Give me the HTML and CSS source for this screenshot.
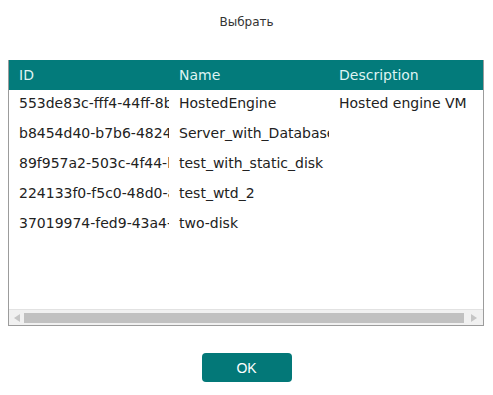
FILE: index.html
```html
<!doctype html>
<html>
<head>
  <meta charset='UTF-8'>
  <title>Выбрать</title>
  <link rel="stylesheet" href="styles.css">
</head>
<body>
  <div class='dialog'>
    <h1 class='title'>Выбрать</h1>
    <div class='grid_box'>
      <div class='grid_view'>
        <table class='grid'>
          <colgroup><col><col><col></colgroup>
          <thead>
            <tr><th>ID</th><th>Name</th><th>Description</th></tr>
          </thead>
          <tbody>
            <tr><td>553de83c-fff4-44ff-8b9c-3a1f2e7d0c11</td><td>HostedEngine</td><td>Hosted engine VM</td></tr>
            <tr><td>b8454d40-b7b6-4824-9e21-5c0d1a2b3f44</td><td>Server_with_Database</td><td></td></tr>
            <tr><td>89f957a2-503c-4f44-b0e2-7a6c9d1e2f33</td><td>test_with_static_disk</td><td></td></tr>
            <tr><td>224133f0-f5c0-48d0-a7b1-2c3d4e5f6a77</td><td>test_wtd_2</td><td></td></tr>
            <tr><td>37019974-fed9-43a4-8c2d-1e0f9a8b7c66</td><td>two-disk</td><td></td></tr>
          </tbody>
        </table>
      </div>
      <div class='hscroll'>
        <span class='arrow left'></span>
        <span class='track'><span class='thumb'></span></span>
        <span class='arrow right'></span>
      </div>
    </div>
    <div class='actions'>
      <button class='ok'>OK</button>
    </div>
  </div>
</body>
</html>
```

FILE: styles.css
```css
body {
  margin: 0;
  background: #fff;
  color: #222;
  font-family: 'DejaVu Sans', sans-serif
}
.dialog {
  display: flex;
  flex-direction: column;
  height: 395px
}
.title {
  margin: 0;
  padding-top: 14px;
  height: 60px;
  flex: none;
  box-sizing: border-box;
  font-size: 12px;
  font-weight: normal;
  line-height: 16px;
  text-align: center;
  color: #333
}
.grid_box {
  margin: 0 9px 0 8px;
  height: 266px;
  flex: none;
  border: 1px solid #9c9c9c;
  border-top: 0;
  box-sizing: border-box;
  display: flex;
  flex-direction: column
}
.grid_view {
  flex: 1;
  overflow: hidden
}
.grid {
  border-collapse: collapse;
  table-layout: fixed;
  width: 480px;
  font-size: 14px
}
.grid col { width: 160px }
.grid th, .grid td {
  padding: 0 0 0 10px;
  white-space: nowrap;
  overflow: hidden;
  text-align: left;
  font-weight: normal
}
.grid th {
  background: #037b7b;
  color: #dff3f2;
  height: 30px;
  line-height: 30px
}
.grid td {
  height: 26px;
  line-height: 26px;
  padding-bottom: 4px;
  color: #222
}
.hscroll {
  height: 15px;
  flex: none;
  display: flex;
  border-top: 1px solid #e2e2e2;
  background: #f1f1f1
}
.arrow {
  width: 15px;
  display: flex;
  align-items: center;
  justify-content: center
}
.arrow.right { width: 19px }
.arrow::before {
  content: '';
  border-top: 4px solid transparent;
  border-bottom: 4px solid transparent
}
.arrow.left::before { border-right: 6px solid #c6c6c6 }
.arrow.right::before { border-left: 6px solid #c6c6c6 }
.track {
  flex: 1;
  display: flex;
  align-items: center
}
.thumb {
  height: 10px;
  width: 100%;
  background: #c1c1c1
}
.actions {
  display: flex;
  justify-content: center;
  padding-top: 27px
}
.ok {
  width: 90px;
  height: 29px;
  border: 0;
  border-radius: 4px;
  background: #037878;
  color: #fff;
  font-family: 'Liberation Sans', sans-serif;
  font-size: 14px
}
```
